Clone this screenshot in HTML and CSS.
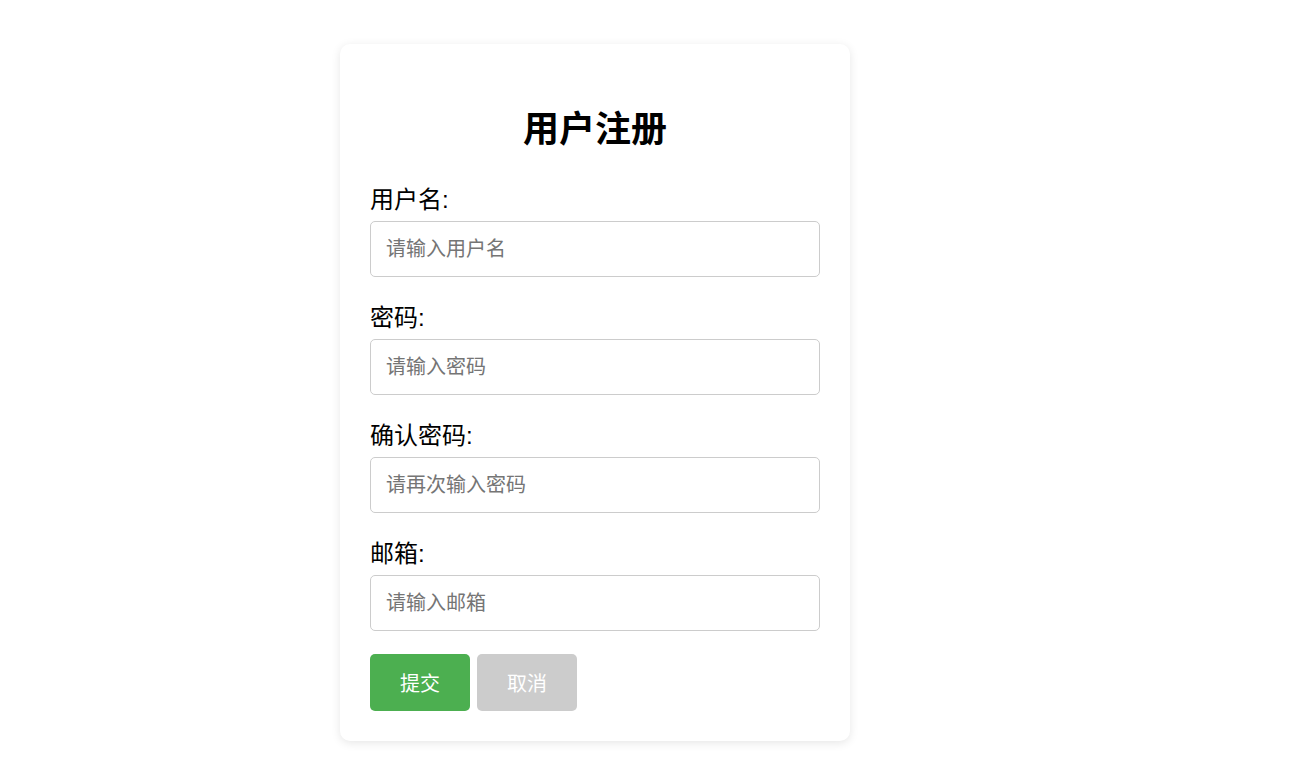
FILE: index.html
```html
<!DOCTYPE html>
<html lang="zh-CN">
<head>
  <meta charset="UTF-8">
  <meta name="viewport" content="width=device-width, initial-scale=1.0">
  <title>用户注册</title>
  <link rel="stylesheet" href="styles.css">
</head>
<body>
  <div class="register-box">
    <h2>用户注册</h2>
    <form class="register-form">
      <div class="form-group">
        <label for="username">用户名:</label>
        <input type="text" id="username" placeholder="请输入用户名">
      </div>
      <div class="form-group">
        <label for="password">密码:</label>
        <input type="password" id="password" placeholder="请输入密码">
      </div>
      <div class="form-group">
        <label for="confirm">确认密码:</label>
        <input type="password" id="confirm" placeholder="请再次输入密码">
      </div>
      <div class="form-group">
        <label for="email">邮箱:</label>
        <input type="email" id="email" placeholder="请输入邮箱">
      </div>
      <div class="actions">
        <button type="submit" class="btn btn-submit">提交</button>
        <button type="reset" class="btn btn-cancel">取消</button>
      </div>
    </form>
  </div>
</body>
</html>
```

FILE: styles.css
```css
* {
  margin: 0;
  padding: 0;
  box-sizing: border-box;
}

body {
  font-family: "Liberation Sans", "Noto Sans CJK SC", sans-serif;
  background: #ffffff;
  color: #000000;
  padding-bottom: 20px;
}

.register-box {
  width: 510px;
  margin: 44px 0 0 340px;
  padding: 30px;
  background: #ffffff;
  border-radius: 10px;
  box-shadow: 0 2px 10px rgba(0, 0, 0, 0.1);
}

h2 {
  text-align: center;
  font-size: 36px;
  font-weight: 700;
  line-height: 40px;
  margin: 36px 0 32px;
}

.form-group {
  margin-bottom: 23px;
}

.form-group label {
  display: block;
  font-size: 24px;
  line-height: 32px;
  padding-top: 2px;
  margin-bottom: 5px;
}

.form-group input {
  display: block;
  width: 100%;
  height: 56px;
  padding: 0 15px;
  font-family: "Liberation Sans", "Noto Sans CJK SC", sans-serif;
  font-size: 20px;
  color: #000000;
  border: 1px solid #cccccc;
  border-radius: 5px;
  outline: none;
}

.form-group input::placeholder {
  color: #757575;
}

.actions {
  display: flex;
  gap: 7px;
}

.btn {
  width: 100px;
  height: 57px;
  font-family: "Liberation Sans", "Noto Sans CJK SC", sans-serif;
  font-size: 20px;
  color: #ffffff;
  border: none;
  border-radius: 5px;
  cursor: pointer;
}

.btn-submit {
  background: #4caf50;
}

.btn-cancel {
  background: #cccccc;
}
```
